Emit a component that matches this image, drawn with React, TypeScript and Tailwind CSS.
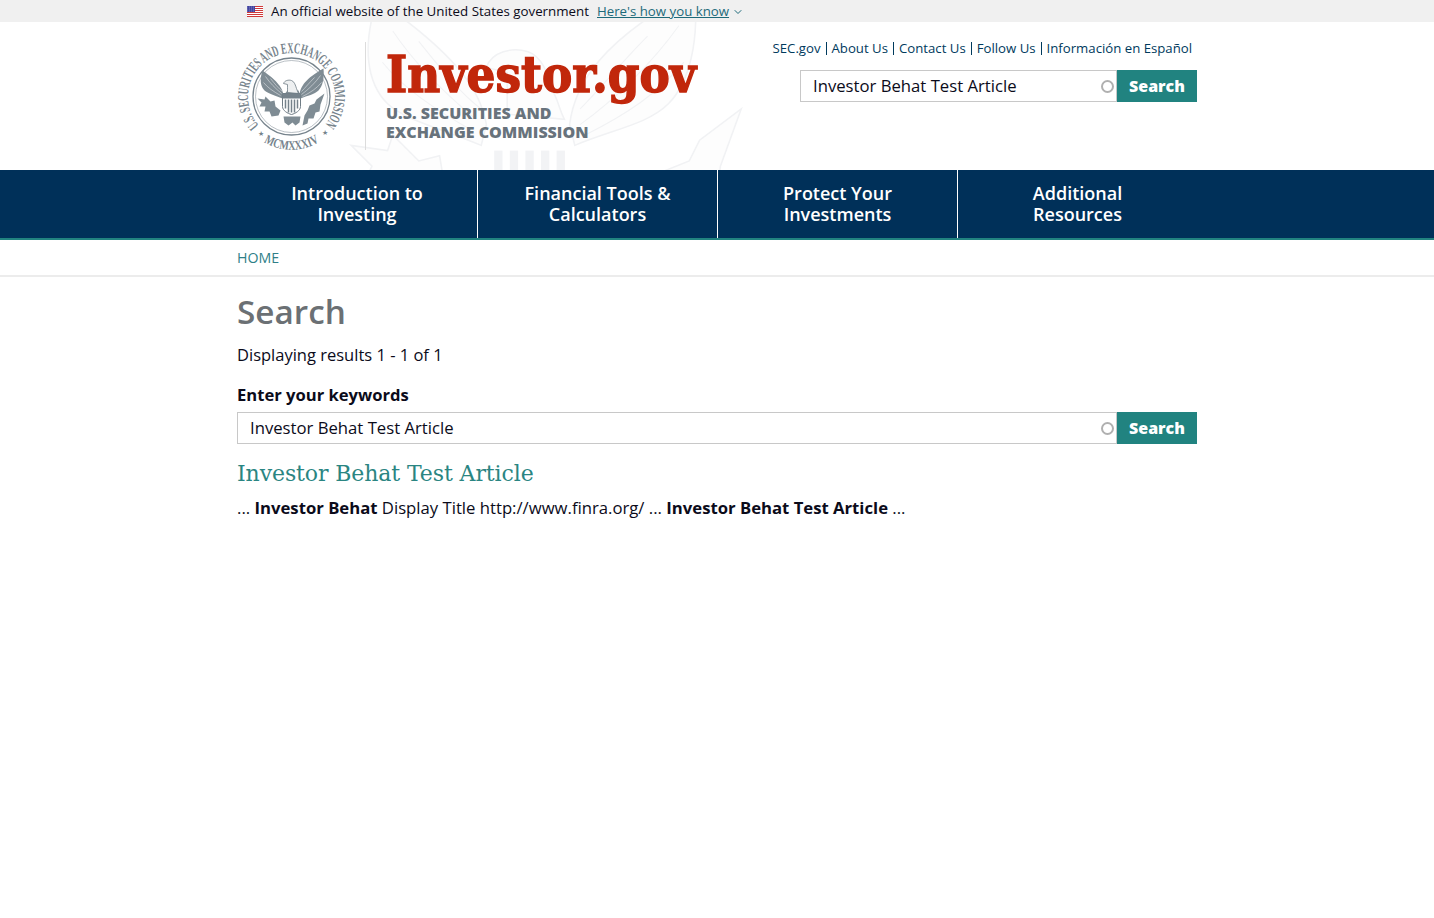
import React from 'react';
import { ChevronDown } from 'lucide-react';

const sans = "font-['Open_Sans',sans-serif]";

const UsFlag = () => (
  <svg width="16" height="11" viewBox="0 0 16 11" className="shrink-0">
    <rect width="16" height="11" fill="#fff" />
    {[0, 2, 4, 6, 8, 10].map((y) => (
      <rect key={y} y={y} width="16" height="1" fill="#d0393a" />
    ))}
    <rect width="8" height="6" fill="#3a3d9c" />
    {[1, 3, 5].map((y) =>
      [1, 3, 5, 7].map((x) => <circle key={`${x}-${y}`} cx={x - 0.2} cy={y} r="0.45" fill="#e8e8f6" />)
    )}
  </svg>
);

const wingLeft = 'M-8 -2 C-9 -8 -13 -15 -29 -26 C-32 -17 -31 -10 -27 -6 C-24 -3 -16 -1 -9 2 Z';
const wingRight = 'M8 -2 C9 -10 14 -18 32 -28 C33 -18 31 -10 27 -6 C23 -2 16 -1 9 2 Z';
const head = 'M-4 -4 C-4 -8 -4 -10 -4 -12 L-8 -13 C-7 -16 -3 -17 0 -16 C3 -15 4 -11 5 -8 C6 -6 6 -5 7 -3 Z';
const tail = 'M-8 20 L9 20 L8 26 L4 29 L1 26 L-3 29 L-7 26 Z';
const olive = 'M-13 19 L-20 20 L-22 15 L-27 15 L-26 10 L-32 10 L-30 6 L-34 2 L-27 3 L-26 0 L-21 5 L-17 4 L-16 10 L-11 14 Z';
const arrows = 'M11 29 L16 27 L17 22 L22 22 L24 16 L28 15 L29 8 L33 -3 L25 3 L23 7 L18 9 L16 14 L13 19 Z';
const featherLines = [
  'M-26 -20 C-22 -14 -16 -8 -10 -3',
  'M-28 -14 C-24 -9 -18 -5 -11 -1',
  'M-21 -18 C-17 -13 -13 -8 -9 -5',
  'M29 -21 C24 -14 17 -7 10 -2',
  'M30 -14 C25 -8 19 -4 11 0',
  'M23 -19 C18 -14 14 -9 10 -5',
];

const SealEagle = () => (
  <g>
    <g fill="#7f8c94">
      <path d={wingLeft} />
      <path d={wingRight} />
      <path d={tail} />
      <path d={olive} />
      <path d={arrows} />
      <path d="M-4 -6 L7 -6 L9 0 L-9 0 Z" />
    </g>
    <g fill="none" stroke="#dfe3e5" strokeWidth="0.6">
      {featherLines.map((d) => (
        <path key={d} d={d} />
      ))}
    </g>
    <path d={head} fill="#eef0f1" stroke="#6f7c85" strokeWidth="0.8" />
    <path d="M-9 -3 L9 -3 L9 10 C9 14 4 17 0 18 C-4 17 -9 14 -9 10 Z" fill="#fff" stroke="#6f7c85" />
    <rect x="-9" y="-3" width="18" height="5" fill="#75828b" />
    {[-6, -3, 0, 3, 6].map((x) => (
      <rect key={x} x={x - 0.75} y="3" width="1.5" height={x === -6 || x === 6 ? 9 : 13} fill="#75828b" />
    ))}
  </g>
);

const Seal = () => (
  <svg width="109" height="109" viewBox="-54.5 -54.5 109 109" className="shrink-0 overflow-visible">
    <defs>
      <path id="sealArc" d="M-32.5 29 A 43.5 43.5 0 1 1 32.5 29" />
      <path id="sealArcBottom" d="M-40 35 A 53 53 0 0 0 40 35" />
    </defs>
    <circle r="38.5" fill="none" stroke="#76838c" strokeWidth="1.3" />
    <circle r="36" fill="none" stroke="#76838c" strokeWidth="0.5" />
    <text fill="#76838c" fontSize="15" fontFamily="'Liberation Serif', serif" fontWeight="700">
      <textPath href="#sealArc" textLength="198" lengthAdjust="spacingAndGlyphs">
        U.S. SECURITIES AND EXCHANGE COMMISSION
      </textPath>
    </text>
    <text fill="#76838c" fontSize="13" fontFamily="'Liberation Serif', serif" fontWeight="700" textAnchor="middle">
      <textPath href="#sealArcBottom" startOffset="50%" textLength="58" lengthAdjust="spacingAndGlyphs">
        MCMXXXIV
      </textPath>
    </text>
    <g fill="#76838c" fontSize="7" textAnchor="middle">
      <text x="-31" y="39">★</text>
      <text x="33" y="38">★</text>
    </g>
    <SealEagle />
  </svg>
);

const Watermark = () => (
  <svg width="440" height="148" viewBox="0 0 440 148" className="absolute left-[96px] top-0">
    <g transform="translate(195 113) scale(5.2)" fill="#fdfdfd" stroke="#f1f2f4" strokeWidth="0.3">
      <path d={wingLeft} />
      <path d={wingRight} />
      <path d={olive} />
      <path d={arrows} transform="translate(8 -2)" />
      <path d={head} />
      <path d="M-9 3 L9 3 L9 10 L-9 10 Z" fill="#fff" stroke="none" />
      {[-6.5, -3.5, -0.5, 2.5, 5.5].map((x) => (
        <rect key={x} x={x} y="3" width="1.6" height="7" fill="#f2f3f5" stroke="none" />
      ))}
      <g fill="none" strokeWidth="0.2">
        {featherLines.map((d) => (
          <path key={d} d={d} />
        ))}
      </g>
    </g>
  </svg>
);

const TopLink = ({ label, last }: { label: string; last?: boolean }) => (
  <a className={`text-[13.2px] leading-[13px] text-[#003a5d] ${last ? '' : 'mr-[5px] border-r border-[#003a5d] pr-[5px]'}`}>{label}</a>
);

const SearchBox = ({ wide }: { wide?: boolean }) => (
  <div className={`flex h-8 ${wide ? 'w-full' : 'w-[397px]'}`}>
    <div className="flex flex-1 items-center border border-[#c8c8c8] bg-white pl-3 pr-[2px]">
      <span className="flex-1 pb-px text-[16.7px] leading-[25px] text-[#0b0b1a]">Investor Behat Test Article</span>
      <span className="mt-px h-[13px] w-[13px] rounded-full border-2 border-[#b0b0b0]" />
    </div>
    <button className="w-20 bg-[#218380] text-base font-extrabold text-white">Search</button>
  </div>
);

const navItems = [
  ['Introduction to', 'Investing'],
  ['Financial Tools &', 'Calculators'],
  ['Protect Your', 'Investments'],
  ['Additional', 'Resources'],
];

export default function App() {
  return (
    <div className={`${sans} min-h-[918px] bg-white text-[#0b0b1a]`}>
      {/* gov banner */}
      <div className="h-[22px] bg-[#f0f0f0]">
        <div className="mx-auto flex h-full w-[960px] items-center pt-px pl-[10px] text-[13.33px]">
          <UsFlag />
          <span className="ml-2">An official website of the United States government</span>
          <a className="ml-2 text-[13.25px] text-[#1d6a7a] underline">Here&apos;s how you know</a>
          <ChevronDown className="ml-[3px] h-[12px] w-[12px] text-[#1d6a7a]" strokeWidth={2} />
        </div>
      </div>

      {/* header */}
      <header className="relative mx-auto flex h-[148px] w-[960px] justify-between overflow-hidden">
        <Watermark />

        <div className="relative flex pt-[20px]">
          <Seal />
          <div className="ml-[19px] h-[108px] w-px bg-[#dcdcdc]" />
          <div className="ml-5 flex flex-col">
            <div className="h-[62px] origin-left scale-x-[0.89] font-['DejaVu_Serif',serif] text-[51px] leading-[64px] font-bold text-[#c1270b] [-webkit-text-stroke:1.5px_#c1270b]">
              Investor.gov
            </div>
            <div className="text-base leading-[19px] font-extrabold text-[#68737c]">
              U.S. SECURITIES AND
              <br />
              EXCHANGE COMMISSION
            </div>
          </div>
        </div>

        <div className="relative flex flex-col items-end pt-5">
          <div className="mr-[5px] flex items-center">
            <TopLink label="SEC.gov" />
            <TopLink label="About Us" />
            <TopLink label="Contact Us" />
            <TopLink label="Follow Us" />
            <TopLink label="Información en Español" last />
          </div>
          <div className="mt-[15px]">
            <SearchBox />
          </div>
        </div>
      </header>

      {/* main nav */}
      <nav className="h-[70px] border-b-2 border-[#218380] bg-[#003059]">
        <div className="mx-auto grid h-full w-[960px] grid-cols-[241px_240px_240px_239px]">
          {navItems.map((item, i) => (
            <a
              key={item[0]}
              className={`flex items-center justify-center text-center text-lg leading-[21px] font-semibold text-white ${i < 3 ? 'border-r border-white' : ''}`}
            >
              <span>
                {item[0]}
                <br />
                {item[1]}
              </span>
            </a>
          ))}
        </div>
      </nav>

      {/* breadcrumb */}
      <div className="h-[37px] border-b-2 border-[#ececec]">
        <div className="mx-auto w-[960px] pt-2 text-[14.2px] leading-[19px] font-medium text-[#2f7f88]">HOME</div>
      </div>

      {/* content */}
      <main className="mx-auto w-[960px]">
        <h1 className="mt-3 text-[33.3px] leading-[44px] font-semibold text-[#6b7074]">Search</h1>
        <p className="mt-[10px] text-[16.5px] leading-6">Displaying results 1 - 1 of 1</p>
        <div className="mt-[17px] text-[16.6px] leading-[22px] font-bold">Enter your keywords</div>
        <div className="mt-[6px]">
          <SearchBox wide />
        </div>
        <h3 className="mt-[14px] font-['DejaVu_Serif',serif] text-[22px] leading-[32px] tracking-[-0.1px] text-[#2a8582]">
          Investor Behat Test Article
        </h3>
        <p className="mt-[6px] text-[16.7px] leading-6">
          ... <strong>Investor Behat</strong> Display Title http://www.finra.org/ ... <strong>Investor Behat Test Article</strong> ...
        </p>
      </main>
    </div>
  );
}
